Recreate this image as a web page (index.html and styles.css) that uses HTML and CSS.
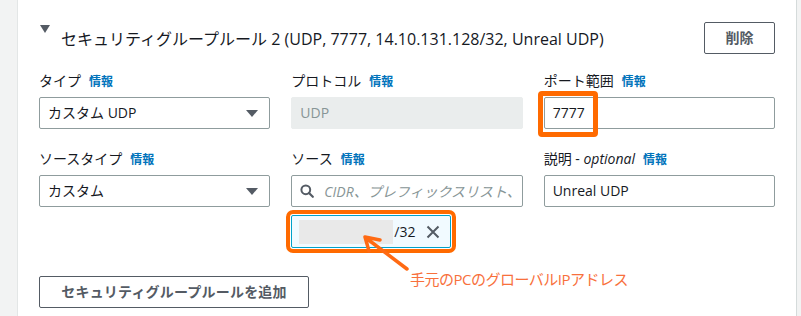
FILE: index.html
```html
<!DOCTYPE html>
<html lang="ja">
<head>
<meta charset="utf-8">
<link rel="stylesheet" href="styles.css">
</head>
<body>
<div class="page">
  <div class="panel">
    <div class="header">
      <div class="title">
        <svg class="caret-down" width="10" height="8" viewBox="0 0 10 8"><path d="M0 0H10L5 8Z" fill="#545b64"/></svg>
        <span class="title-text">セキュリティグループルール 2 (UDP, 7777, 14.10.131.128/32, Unreal UDP)</span>
      </div>
      <button class="btn btn-delete">削除</button>
    </div>

    <div class="grid">
      <div class="field">
        <div class="label">タイプ<span class="info">情報</span></div>
        <div class="control select">
          <span class="value">カスタム UDP</span>
          <svg class="sel-caret" width="12" height="7" viewBox="0 0 12 7"><path d="M0 0H12L6 7Z" fill="#545b64"/></svg>
        </div>
      </div>
      <div class="field">
        <div class="label">プロトコル<span class="info">情報</span></div>
        <div class="control disabled"><span class="value">UDP</span></div>
      </div>
      <div class="field">
        <div class="label">ポート範囲<span class="info">情報</span></div>
        <div class="control input port">
          <span class="value">7777</span>
          <span class="mark mark-port"></span>
        </div>
      </div>

      <div class="field">
        <div class="label">ソースタイプ<span class="info">情報</span></div>
        <div class="control select">
          <span class="value">カスタム</span>
          <svg class="sel-caret" width="12" height="7" viewBox="0 0 12 7"><path d="M0 0H12L6 7Z" fill="#545b64"/></svg>
        </div>
      </div>
      <div class="field">
        <div class="label">ソース<span class="info">情報</span></div>
        <div class="control input search">
          <svg class="search-icon" width="14" height="14" viewBox="0 0 14 14"><circle cx="5.8" cy="5.8" r="4.4" fill="none" stroke="#545b64" stroke-width="2"/><path d="M9 9L12.8 12.8" stroke="#545b64" stroke-width="2.2" stroke-linecap="round"/></svg>
          <span class="placeholder">CIDR、プレフィックスリスト、</span>
        </div>
        <div class="chip">
          <span class="mask"></span>
          <span class="chip-text">/32</span>
          <svg class="chip-x" width="14" height="14" viewBox="0 0 14 14"><path d="M1.5 1.5L12.5 12.5M12.5 1.5L1.5 12.5" stroke="#545b64" stroke-width="2"/></svg>
        </div>
      </div>
      <div class="field">
        <div class="label">説明 - <em>optional</em><span class="info">情報</span></div>
        <div class="control input"><span class="value">Unreal UDP</span></div>
      </div>
    </div>

    <button class="btn btn-add">セキュリティグループルールを追加</button>
  </div>

  <svg class="arrow" width="801" height="316" viewBox="0 0 801 316">
    <path d="M407 269L366 238M365 237L380 240M365 237L369 251" stroke="#ff6a13" stroke-width="3.5" stroke-linecap="round" fill="none"/>
  </svg>
  <div class="note">手元のPCのグローバルIPアドレス</div>
</div>
</body>
</html>
```

FILE: styles.css
```css
html, body {
  margin: 0;
  padding: 0;
}
body {
  background: #f2f3f3;
  font-family: "Open Sans", "Noto Sans CJK JP", sans-serif;
  color: #16191f;
  width: 801px;
  height: 316px;
  overflow: hidden;
}
.page {
  position: relative;
  width: 801px;
  height: 316px;
  overflow: hidden;
}
.panel {
  margin-left: 17px;
  width: 780px;
  min-height: 340px;
  background: #fff;
  border-left: 1px solid #e3e6e6;
  border-right: 1px solid #d5dbdb;
  padding: 22px 21px 0 21px;
  box-sizing: border-box;
}
.header {
  display: flex;
  justify-content: space-between;
  align-items: center;
  height: 32px;
}
.title {
  display: flex;
  align-items: center;
  height: 32px;
}
.caret-down {
  align-self: flex-start;
  margin: 3px 11px 0 1px;
}
.title-text {
  font-size: 16px;
  line-height: 22px;
  padding-top: 1px;
}
.btn {
  font-family: "Open Sans", "Noto Sans CJK JP", sans-serif;
  font-weight: 700;
  font-size: 14px;
  color: #545b64;
  background: #fff;
  border: 1px solid #545b64;
  border-radius: 2px;
  height: 32px;
  line-height: 20px;
  box-sizing: border-box;
  padding: 0;
}
.btn-delete {
  width: 71px;
}
.btn-add {
  width: 270px;
  margin-top: 28px;
  display: block;
  letter-spacing: 0.2px;
}
.grid {
  display: grid;
  grid-template-columns: repeat(3, minmax(0, 1fr));
  column-gap: 21px;
  row-gap: 20px;
  margin-top: 17px;
  align-items: start;
}
.label {
  font-size: 14px;
  line-height: 20px;
  height: 20px;
  margin-bottom: 6px;
  white-space: nowrap;
}
.label em {
  font-style: italic;
}
.info {
  color: #0073bb;
  font-weight: 700;
  font-size: 12px;
  margin-left: 8px;
}
.control {
  position: relative;
  height: 32px;
  box-sizing: border-box;
  border: 1px solid #8f9c9d;
  border-radius: 2px;
  display: flex;
  align-items: center;
  padding: 0 8px;
  font-size: 14px;
  background: #fff;
}
.control .value {
  line-height: 20px;
}
.select {
  justify-content: space-between;
  padding-right: 11px;
}
.disabled {
  background: #eaeded;
  border-color: #eaeded;
  color: #879596;
}
.search {
  overflow: hidden;
}
.search-icon {
  flex: none;
  margin-right: 10px;
}
.placeholder {
  color: #879596;
  font-style: italic;
  white-space: nowrap;
  overflow: hidden;
}
.mark {
  position: absolute;
  border: 5px solid #ff6a00;
  border-radius: 4px;
  box-sizing: border-box;
}
.mark-port {
  left: -7px;
  top: -7px;
  width: 60px;
  height: 46px;
}
.chip {
  margin-top: 8px;
  width: 160px;
  height: 33px;
  box-sizing: border-box;
  border: 1px solid #00a1c9;
  border-radius: 2px;
  background: #f1faff;
  display: flex;
  align-items: center;
  padding: 0 10px 0 7px;
  outline: 4px solid #ff6a00;
  outline-offset: 1px;
}
.mask {
  width: 94px;
  height: 24px;
  background: #e9e9e9;
  flex: none;
}
.chip-text {
  font-size: 14px;
  margin-left: 1px;
}
.chip-x {
  margin-left: auto;
}
.arrow {
  position: absolute;
  left: 0;
  top: 0;
  pointer-events: none;
}
.note {
  position: absolute;
  left: 410px;
  top: 269px;
  font-size: 15px;
  line-height: 20px;
  color: #f8703c;
  letter-spacing: -0.5px;
  white-space: nowrap;
}
```
